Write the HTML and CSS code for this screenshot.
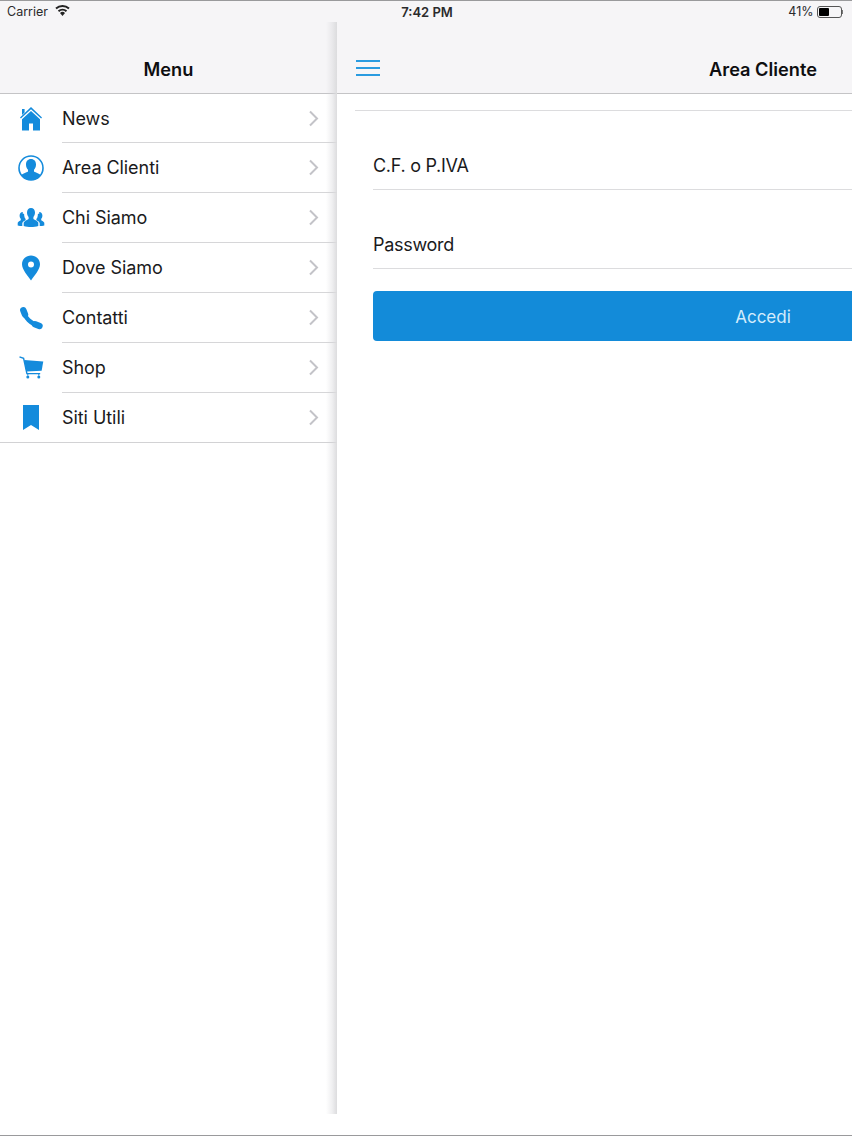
FILE: index.html
```html
<!DOCTYPE html>
<html lang="it">
<head>
<meta charset="utf-8">
<title>Area Cliente</title>
<link rel="stylesheet" href="styles.css">
</head>
<body>
<div class="app">
  <div class="status">
    <div class="status-left">
      <span>Carrier</span>
      <svg class="wifi" width="15" height="11" viewBox="0 0 15 11"><path d="M7.5 11 5 7.900a3.800 3.800 0 0 1 5 0Z" fill="#222"/><path d="M3.500 6.200a6.200 6.200 0 0 1 8 0M1 3.400a10 10 0 0 1 13 0" fill="none" stroke="#222" stroke-width="2"/></svg>
    </div>
    <div class="status-time">7:42 PM</div>
    <div class="status-right">
      <span>41%</span>
      <span class="battery"><span class="battery-level"></span></span>
      <span class="battery-tip"></span>
    </div>
  </div>
  <div class="panels">
    <aside class="sidebar">
      <header class="nav nav-menu"><h1 class="nav-title">Menu</h1></header>
      <ul class="menu">
        <li class="row">
          <span class="row-icon"><svg width="28" height="28" viewBox="0 0 28 28"><path d="M14 2 3 12.500l.9 1L14 4.200l10.100 9.300.9-1Z" fill="#148bdc"/><path d="M5 4h2.600v3.600L5 10Z" fill="#148bdc"/><path d="M14 6 5 14.300V25.500h7v-7h4v7h7V14.300Z" fill="#148bdc"/></svg></span>
          <span class="row-body"><span class="row-label">News</span><svg class="chev" width="11" height="17" viewBox="0 0 11 17"><path d="m2 1.500 7 7-7 7" fill="none" stroke="#c3c3c8" stroke-width="2"/></svg></span>
        </li>
        <li class="row">
          <span class="row-icon"><svg width="28" height="28" viewBox="0 0 28 28"><defs><clipPath id="ci"><circle cx="14" cy="14" r="12"/></clipPath></defs><circle cx="14" cy="14" r="12" fill="none" stroke="#148bdc" stroke-width="1.600"/><g clip-path="url(#ci)"><path d="M14 5c-3.200 0-5 2.400-5 5.400 0 2.300.8 4.200 2 5.400v1.800c-1.500 1.200-6 2-7 4.400L5 28h18l1-6c-1-2.400-5.500-3.200-7-4.400v-1.800c1.200-1.200 2-3.100 2-5.400C19 7.400 17.200 5 14 5Z" fill="#148bdc"/></g></svg></span>
          <span class="row-body"><span class="row-label">Area Clienti</span><svg class="chev" width="11" height="17" viewBox="0 0 11 17"><path d="m2 1.500 7 7-7 7" fill="none" stroke="#c3c3c8" stroke-width="2"/></svg></span>
        </li>
        <li class="row">
          <span class="row-icon"><svg width="28" height="28" viewBox="0 0 28 28"><path d="M14 4c-2.500 0-4 2-4 4.500 0 1.900.6 3.400 1.600 4.400v2c-1.400 1.100-4.100 1.700-4.900 3.600v3.500c2.200.7 4.800 1 7.300 1s5.100-.3 7.300-1v-3.500c-.8-1.900-3.500-2.500-4.900-3.600v-2c1-1 1.600-2.500 1.600-4.400C18 6 16.500 4 14 4Z" fill="#148bdc"/><path d="M5.800 8c-2 0-3.200 1.600-3.200 3.500 0 1.400.5 2.600 1.200 3.300v1.500c-1 .7-2.500 1.200-3.100 2.500v2.600c1.400.5 3 .7 4.600.7v-3.200c.7-1.300 2-2 3.300-2.700v-1.300c-.8-.9-1.300-2.100-1.400-3.500 0-1.500-.1-1.900-1.400-1.300Z" fill="#148bdc"/><path d="M22.200 8c2 0 3.200 1.600 3.200 3.500 0 1.400-.5 2.600-1.200 3.300v1.500c1 .7 2.500 1.200 3.100 2.500v2.600c-1.400.5-3 .7-4.600.7v-3.200c-.7-1.300-2-2-3.300-2.700v-1.300c.8-.9 1.300-2.100 1.400-3.500 0-1.500.1-1.900 1.400-1.300Z" fill="#148bdc"/></svg></span>
          <span class="row-body"><span class="row-label">Chi Siamo</span><svg class="chev" width="11" height="17" viewBox="0 0 11 17"><path d="m2 1.500 7 7-7 7" fill="none" stroke="#c3c3c8" stroke-width="2"/></svg></span>
        </li>
        <li class="row">
          <span class="row-icon"><svg width="28" height="28" viewBox="0 0 28 28"><path d="M14 1.500c-5 0-9 3.800-9 8.700 0 5.300 5.500 11 9 16.300 3.500-5.300 9-11 9-16.300 0-4.900-4-8.700-9-8.700Zm0 6a3 3 0 1 1 0 6 3 3 0 0 1 0-6Z" fill="#148bdc" fill-rule="evenodd"/></svg></span>
          <span class="row-body"><span class="row-label">Dove Siamo</span><svg class="chev" width="11" height="17" viewBox="0 0 11 17"><path d="m2 1.500 7 7-7 7" fill="none" stroke="#c3c3c8" stroke-width="2"/></svg></span>
        </li>
        <li class="row">
          <span class="row-icon"><svg width="28" height="28" viewBox="0 0 28 28"><path d="M6.500 7C7.500 13.500 14 20 21.500 21.500" fill="none" stroke="#148bdc" stroke-width="4.200"/><path d="M6.300 6.300 8 10.500M18 20.200 22.500 22" fill="none" stroke="#148bdc" stroke-width="6.400" stroke-linecap="round"/></svg></span>
          <span class="row-body"><span class="row-label">Contatti</span><svg class="chev" width="11" height="17" viewBox="0 0 11 17"><path d="m2 1.500 7 7-7 7" fill="none" stroke="#c3c3c8" stroke-width="2"/></svg></span>
        </li>
        <li class="row">
          <span class="row-icon"><svg width="28" height="28" viewBox="0 0 28 28"><path d="M2.500 2.800 6.600 4.300l3.300 15.300h13.300" fill="none" stroke="#148bdc" stroke-width="1.400"/><path d="M7.300 6 26.300 7.500 24.600 16.700 9.200 17.500Z" fill="#148bdc"/><circle cx="10.800" cy="23" r="1.500" fill="#148bdc"/><circle cx="21.800" cy="23" r="1.500" fill="#148bdc"/><path d="M10.800 19.600v2M21.800 19.600v2" stroke="#148bdc" stroke-width="1"/></svg></span>
          <span class="row-body"><span class="row-label">Shop</span><svg class="chev" width="11" height="17" viewBox="0 0 11 17"><path d="m2 1.500 7 7-7 7" fill="none" stroke="#c3c3c8" stroke-width="2"/></svg></span>
        </li>
        <li class="row">
          <span class="row-icon"><svg width="28" height="28" viewBox="0 0 28 28"><path d="M6 1h16v25l-8-5-8 5Z" fill="#148bdc"/></svg></span>
          <span class="row-body"><span class="row-label">Siti Utili</span><svg class="chev" width="11" height="17" viewBox="0 0 11 17"><path d="m2 1.500 7 7-7 7" fill="none" stroke="#c3c3c8" stroke-width="2"/></svg></span>
        </li>
      </ul>
    </aside>
    <div class="drawer-shadow"></div>
    <main class="content">
      <header class="nav nav-main">
        <button class="burger" type="button" aria-label="Menu"><span></span><span></span><span></span></button>
        <h1 class="nav-title">Area Cliente</h1>
      </header>
      <div class="rule"></div>
      <form class="login">
        <div class="field">C.F. o P.IVA</div>
        <div class="field">Password</div>
        <div class="submit">Accedi</div>
      </form>
    </main>
  </div>
</div>
</body>
</html>
```
FILE: styles.css
```css
* { box-sizing: border-box; }
html, body { margin: 0; padding: 0; background: #fff; }
body { font-family: Inter, "Liberation Sans", sans-serif; color: #141416; overflow: hidden; }

.app {
  width: 852px;
  height: 1136px;
  display: flex;
  flex-direction: column;
  border-top: 1px solid #9a9a9c;
  border-bottom: 1px solid #9a9a9c;
  overflow: hidden;
  position: relative;
}

.status {
  height: 21px;
  flex: none;
  background: #f6f5f7;
  display: grid;
  grid-template-columns: 1fr auto 1fr;
  align-items: center;
  font-size: 12.5px;
  color: #2a2a2c;
  padding: 0 9px 0 7px;
}
.status-left { display: flex; align-items: center; gap: 7px; }
.wifi { margin-top: -3px; }
.status-time { font-weight: 600; font-size: 13px; margin-left: 4px; }
.status-right { display: flex; align-items: center; justify-content: flex-end; gap: 3px; }
.battery {
  width: 25px;
  height: 12px;
  border: 1px solid #555;
  border-radius: 3px;
  padding: 1px;
  display: flex;
}
.battery-level { width: 10px; background: #000; border-radius: 1px; }
.battery-tip { width: 1.5px; height: 4px; background: #777; margin-left: -3px; }

.panels { flex: 1; display: flex; position: relative; min-height: 0; }

.nav {
  height: 72px;
  flex: none;
  background: #f6f5f7;
  border-bottom: 1px solid #c4c4c6;
  display: flex;
  align-items: center;
  justify-content: center;
  position: relative;
  padding-top: 22px;
}
.nav-title { margin: 0; font-size: 18.2px; font-weight: 600; color: #0e0e10; letter-spacing: 0; }

.sidebar { width: 337px; flex: none; background: #fff; }

.menu { list-style: none; margin: 0; padding: 0; border-bottom: 1px solid #d2d2d4; }
.row { height: 50px; display: flex; align-items: stretch; }
.row:first-child, .row:last-child { height: 49px; }
.row-icon { width: 62px; flex: none; display: flex; align-items: center; justify-content: center; }
.row-body {
  flex: 1;
  display: flex;
  align-items: center;
  justify-content: space-between;
  padding: 0 18px 0 0;
  border-bottom: 1px solid #d6d6d8;
}
.row:last-child .row-body { border-bottom: 0; }
.row-label { font-size: 18px; color: #1a1a1c; letter-spacing: -0.06px; }

.drawer-shadow {
  position: absolute;
  left: 326px;
  top: 0;
  bottom: 21px;
  width: 11px;
  background: linear-gradient(to right, rgba(200, 200, 204, 0) 0%, rgba(210, 210, 214, 0.35) 55%, #dcdcde 100%);
  pointer-events: none;
}

.content { width: 852px; flex: none; background: #fff; }
.burger {
  position: absolute;
  left: 19px;
  top: 38px;
  width: 24px;
  height: 16px;
  padding: 0;
  border: 0;
  background: none;
  display: flex;
  flex-direction: column;
  justify-content: space-between;
}
.burger span { display: block; height: 2px; background: #2a9be0; }

.rule { height: 1px; margin: 16px 18px 0; background: #dcdcde; }

.login { padding: 0 36px; }
.field {
  height: 79px;
  display: flex;
  align-items: flex-end;
  padding-bottom: 13px;
  font-size: 18px;
  color: #1a1a1c;
  letter-spacing: -0.28px;
  border-bottom: 1px solid #dcdcde;
}
.submit {
  margin-top: 22px;
  height: 50px;
  padding-top: 2px;
  background: #138bd9;
  border-radius: 4px;
  color: #d4ecfc;
  font-size: 17px;
  display: flex;
  align-items: center;
  justify-content: center;
}
```
